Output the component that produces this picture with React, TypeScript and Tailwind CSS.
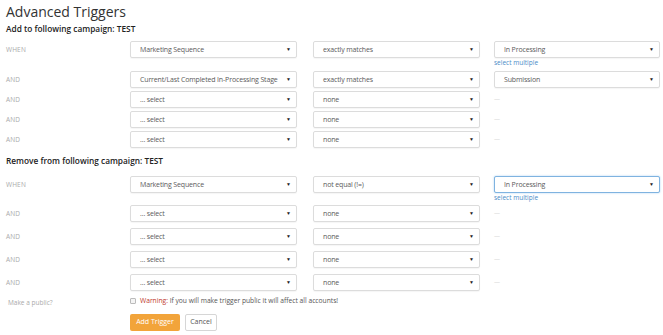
import React from "react";

const font = { fontFamily: "'Open Sans', 'Liberation Sans', sans-serif" };

function Select({ text, w, focus }: { text: string; w: string; focus?: boolean }) {
  return (
    <div
      className={`${w} h-[17px] shrink-0 flex items-center justify-between pl-[9px] pr-[5px] bg-white rounded-[2px] border ${
        focus ? "border-[#7fb3e0] shadow-[0_0_2px_rgba(102,175,233,0.6)]" : "border-[#dcdcdc] shadow-[0_1px_1px_rgba(0,0,0,0.04)]"
      }`}
    >
      <span className="text-[7px] tracking-[-0.15px] text-[#5a5a5a] leading-none whitespace-nowrap">{text}</span>
      <span className="text-[5px] text-[#222] leading-none">▼</span>
    </div>
  );
}

function Row({
  label,
  a,
  b,
  c,
  multiple,
  focus,
  className = "",
}: {
  label: string;
  a: string;
  b: string;
  c?: string;
  multiple?: boolean;
  focus?: boolean;
  className?: string;
}) {
  return (
    <div className={`flex items-start h-[17px] ${className}`}>
      <div className="w-[124px] h-[17px] flex items-center text-[6.5px] text-[#aaa] tracking-wide">{label}</div>
      <Select text={a} w="w-[167px]" />
      <div className="w-[16px]" />
      <Select text={b} w="w-[167px]" />
      <div className="w-[14px]" />
      {c ? (
        <div className="flex flex-col">
          <Select text={c} w="w-[166px]" focus={focus} />
          {multiple && <span className="text-[6.5px] text-[#4a8cc7] mt-[2px] leading-none">select multiple</span>}
        </div>
      ) : (
        <div className="h-[17px] flex items-center text-[6px] text-[#ccc]">—</div>
      )}
    </div>
  );
}

export default function App() {
  return (
    <div className="w-[663px] h-[335px] bg-white overflow-hidden pl-[6px]" style={font}>
      <div className="pt-[3px] text-[14px] leading-[18px] text-[#333]">Advanced Triggers</div>
      <div className="mt-[2px] text-[8.3px] leading-[12px] font-semibold text-[#222]">Add to following campaign: TEST</div>
      <Row className="mt-[6px]" label="WHEN" a="Marketing Sequence" b="exactly matches" c="In Processing" multiple />
      <Row className="mt-[13px]" label="AND" a="Current/Last Completed In-Processing Stage" b="exactly matches" c="Submission" />
      <Row className="mt-[3px]" label="AND" a="... select" b="none" />
      <Row className="mt-[3px]" label="AND" a="... select" b="none" />
      <Row className="mt-[3px]" label="AND" a="... select" b="none" />
      <div className="mt-[7px] text-[8.3px] leading-[12px] font-semibold text-[#222]">Remove from following campaign: TEST</div>
      <Row className="mt-[9px]" label="WHEN" a="Marketing Sequence" b="not equal (!=)" c="In Processing" multiple focus />
      <Row className="mt-[12px]" label="AND" a="... select" b="none" />
      <Row className="mt-[6px]" label="AND" a="... select" b="none" />
      <Row className="mt-[6px]" label="AND" a="... select" b="none" />
      <Row className="mt-[6px]" label="AND" a="... select" b="none" />
      <div className="flex items-start mt-[5px] h-[12px]">
        <div className="w-[124px] pl-[2px] pt-[3px] text-[6.5px] leading-[8px] text-[#aaa]">Make a public?</div>
        <div className="flex items-center gap-[4px] h-[10px]">
          <div className="w-[6px] h-[6px] border border-[#bbb] rounded-[1px] bg-[#f4f4f4]" />
          <span className="text-[6.7px] leading-[10px] text-[#555]">
            <span className="text-[#c0392b]">Warning:</span> If you will make trigger public it will affect all accounts!
          </span>
        </div>
      </div>
      <div className="flex mt-[6px] ml-[124px] gap-[5px]">
        <div className="w-[50px] h-[17px] rounded-[2px] bg-[#f2a43a] text-white text-[7px] flex items-center justify-center">
          Add Trigger
        </div>
        <div className="w-[32px] h-[17px] rounded-[2px] bg-white border border-[#d6d6d6] text-[#555] text-[7px] flex items-center justify-center">
          Cancel
        </div>
      </div>
    </div>
  );
}
